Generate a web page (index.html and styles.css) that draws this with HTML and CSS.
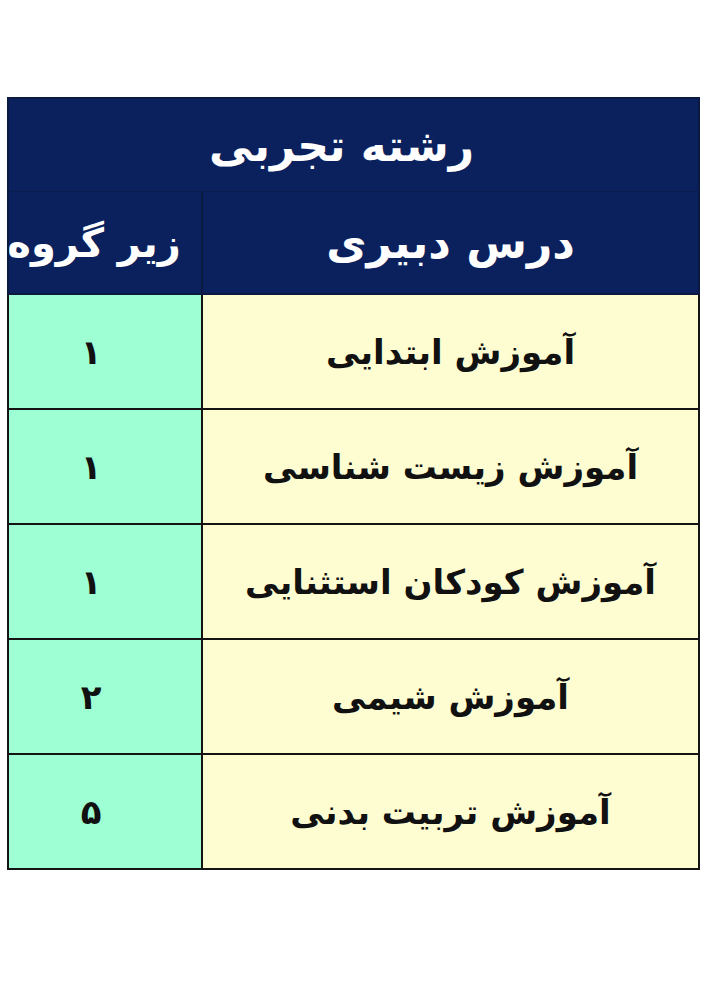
FILE: index.html
```html
<!DOCTYPE html>
<html lang="fa">
<head>
<meta charset="utf-8">
<link rel="stylesheet" href="styles.css">
</head>
<body>
<div class="page">
  <table class="tbl" dir="rtl">
    <colgroup>
      <col class="c-lesson">
      <col class="c-group">
    </colgroup>
    <thead>
      <tr><th class="title" colspan="2"><span class="title-text">رشته تجربی</span></th></tr>
      <tr><th class="h-lesson">درس دبیری</th><th class="h-group"><span class="shift">زیر گروه</span></th></tr>
    </thead>
    <tbody>
      <tr><td class="lesson">آموزش ابتدایی</td><td class="group">۱</td></tr>
      <tr><td class="lesson">آموزش زیست شناسی</td><td class="group">۱</td></tr>
      <tr><td class="lesson">آموزش کودکان استثنایی</td><td class="group">۱</td></tr>
      <tr><td class="lesson">آموزش شیمی</td><td class="group">۲</td></tr>
      <tr><td class="lesson">آموزش تربیت بدنی</td><td class="group">۵</td></tr>
    </tbody>
  </table>
</div>
</body>
</html>
```

FILE: styles.css
```css
html, body {
  margin: 0;
  padding: 0;
  background: #ffffff;
}
.page {
  padding-top: 97px;
  padding-left: 7px;
}
.tbl {
  width: 691px;
  border-collapse: collapse;
  table-layout: fixed;
  font-family: "DejaVu Sans", "Noto Sans", sans-serif;
  font-weight: bold;
}
.c-lesson { width: 497px; }
.c-group { width: 194px; }
.tbl th, .tbl td {
  text-align: center;
  vertical-align: middle;
  padding: 0;
  overflow: hidden;
  white-space: nowrap;
}
.title {
  background: #0b215e;
  color: #ffffff;
  height: 92px;
  font-size: 44px;
  border: 2px solid #0a1a40;
  border-bottom: 1px solid #0a1c50;
}
.title-text {
  display: inline-block;
  margin-right: 24px;
}
.h-lesson, .h-group {
  background: #0b215e;
  color: #ffffff;
  height: 101px;
  font-size: 44px;
  border: 2px solid #0a1a40;
  border-top: none;
}
.h-group {
  font-size: 40px;
}
.shift {
  display: inline-block;
  margin-left: -22px;
}
.lesson, .group {
  height: 113px;
  font-size: 34px;
  color: #111111;
  border: 2px solid #141414;
}
.lesson {
  background: #fefdd2;
}
.tbl .group {
  background: #9dffd3;
  padding-left: 0;
  padding-right: 28px;
}
```
